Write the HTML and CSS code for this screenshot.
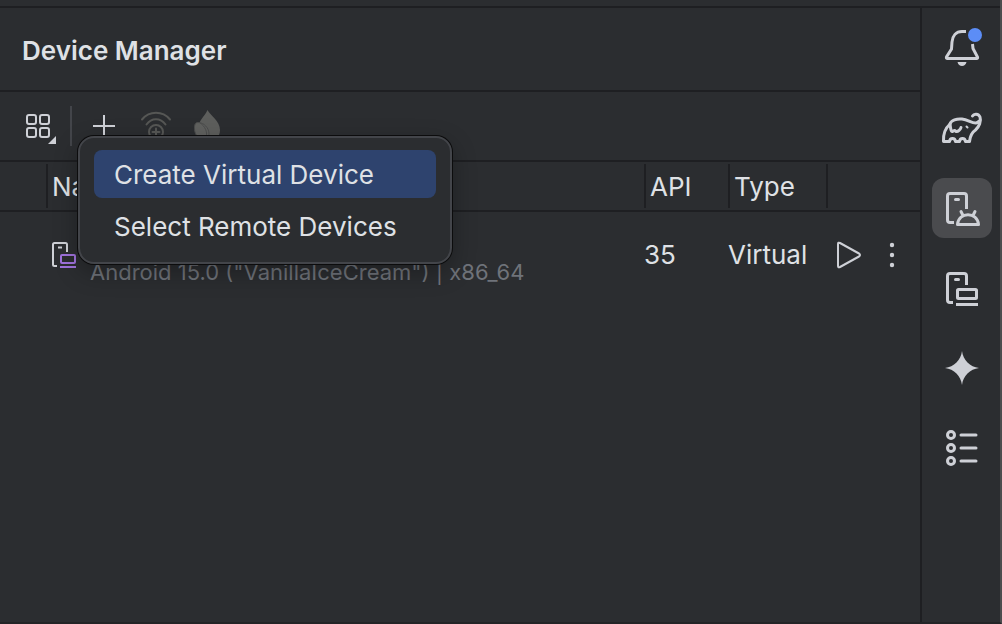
FILE: index.html
```html
<!DOCTYPE html>
<html lang="en">
<head>
<meta charset="utf-8">
<title>Device Manager</title>
<link rel="stylesheet" href="styles.css">
</head>
<body>
<div class="window">
  <main class="panel">
    <header class="title-bar"><h1 class="title">Device Manager</h1></header>
    <div class="toolbar">
      <button class="tool" type="button" aria-label="Group devices">
        <svg width="52" height="40" viewBox="0 0 52 40" fill="none" stroke="#ced0d6" stroke-width="2">
          <rect x="15" y="9" width="9" height="9" rx="2"/><rect x="28" y="9" width="9" height="9" rx="2"/>
          <rect x="15" y="22" width="9" height="9" rx="2"/><rect x="28" y="22" width="9" height="9" rx="2"/>
          <path d="M44 30v8h-8z" fill="#ced0d6" stroke="none"/>
        </svg>
      </button>
      <span class="divider"></span>
      <div class="menu-anchor">
        <button class="tool" type="button" aria-label="Add device" aria-haspopup="menu">
          <svg width="52" height="40" viewBox="0 0 52 40" fill="none" stroke="#ced0d6" stroke-width="2">
            <path d="M15 20h22M26 9v22"/>
          </svg>
        </button>
        <div class="menu" role="menu">
          <button class="menu-item selected" type="button" role="menuitem">Create Virtual Device</button>
          <button class="menu-item" type="button" role="menuitem">Select Remote Devices</button>
        </div>
      </div>
      <button class="tool" type="button" aria-label="Pair over Wi-Fi" disabled>
        <svg width="52" height="40" viewBox="0 0 52 40" fill="none" stroke="#565755" stroke-width="2" stroke-linecap="round">
          <path d="M12 13.500C19.500 4.500 32.500 4.500 40 13.500M16.500 18.500C21.500 11.500 30.500 11.500 35.500 18.500"/>
          <circle cx="26" cy="26" r="7"/><path d="M26 22.500v7M22.500 26h7"/>
        </svg>
      </button>
      <button class="tool" type="button" aria-label="Firebase" disabled>
        <svg width="52" height="40" viewBox="0 0 52 40">
          <path d="M25.500 4C28 9 38 15 38 24C38 31 33 35 27 35C20 35 16 31 16 23C16 15 23 10 25.500 4z" fill="#5d5e5c"/>
          <path d="M16 16.500C22 16.500 27 22 27 28C27 31 25 34 22 35C16 33 12 28 12.500 21C12.500 18.500 13.500 16.500 16 16.500z" fill="#60615f" stroke="#4b4c4c"/>
          <path d="M18 17C23 20 26 26 24 33" fill="none" stroke="#4b4c4c"/>
        </svg>
      </button>
    </div>
    <table class="devices">
      <colgroup><col class="col-icon"><col><col class="col-api"><col class="col-type"><col class="col-actions"></colgroup>
      <thead>
        <tr>
          <th></th>
          <th scope="col"><div class="head">Name</div></th>
          <th scope="col"><div class="head">API</div></th>
          <th scope="col"><div class="head">Type</div></th>
          <th><div class="head"></div></th>
        </tr>
      </thead>
      <tbody>
        <tr>
          <td></td>
          <td>
            <div class="device">
              <svg width="30" height="30" viewBox="0 0 30 30" fill="none" stroke="#ced0d6" stroke-width="2">
                <path d="M11 26H8.500Q7 26 7 24.500V4.500Q7 3 8.500 3H19.500Q21 3 21 4.500V12M12 7.500h4"/>
                <g stroke="#9f72dc"><rect x="15" y="15" width="14" height="8" rx="1"/><path d="M14 27h16"/></g>
              </svg>
              <span class="detail">Android 15.0 ("VanillaIceCream") | x86_64</span>
            </div>
          </td>
          <td>35</td>
          <td>Virtual</td>
          <td>
            <div class="actions">
              <button class="action" type="button" aria-label="Start">
                <svg width="44" height="40" viewBox="0 0 44 40" fill="none" stroke="#ced0d6" stroke-width="2" stroke-linejoin="round">
                  <path d="M12 9Q12 7 14 8L33 18.500Q35 20 33 21.500L14 32Q12 33 12 31z"/>
                </svg>
              </button>
              <button class="action" type="button" aria-label="More actions">
                <svg width="44" height="40" viewBox="0 0 44 40" fill="#ced0d6">
                  <circle cx="22" cy="10" r="2.200"/><circle cx="22" cy="20" r="2.200"/><circle cx="22" cy="30" r="2.200"/>
                </svg>
              </button>
            </div>
          </td>
        </tr>
      </tbody>
    </table>
  </main>
  <nav class="sidebar" aria-label="Tool windows">
    <button class="side" type="button" aria-label="Notifications">
      <svg width="60" height="60" viewBox="0 0 60 60" fill="none" stroke="#ced0d6" stroke-width="3">
        <path d="M34 13.500H30C24 13.500 20.500 18 20 24L19.500 31L14.500 39Q14 40.500 15.500 40.500H44.500Q46 40.500 45.500 39L41 30.500L40.500 26"/>
        <path d="M25.500 44h9C34 46.500 32 48 30 48S26 46.500 25.500 44z" fill="#ced0d6" stroke="none"/>
        <circle cx="43" cy="17" r="7" fill="#5c8df6" stroke="none"/>
      </svg>
    </button>
    <button class="side" type="button" aria-label="Gradle">
      <svg width="60" height="60" viewBox="0 0 60 60" fill="none" stroke="#ced0d6" stroke-width="3" stroke-linejoin="round" stroke-linecap="round">
        <path d="M40.500 18C42 15.500 46.500 15.500 48 19C49.500 23 47 29 43.500 32C39 35 38 39 37.500 43.500H33.500C33 39.500 28 39.500 27.500 43.500H23.500C23 39.500 18 39.500 17.500 43.500H11.500C11 36 13.500 30 18 26C19 22 25 20.500 30 21C36 21.500 40 25.500 44 25Q46 24.500 47 23"/>
        <path d="M18 26C18.500 30 19 34 20.500 33.500C22 33 22 31.500 24 33.500C26 34 28.500 31.500 29 29.500"/>
        <path d="M34.500 28.500l1 1" stroke-width="2"/>
      </svg>
    </button>
    <button class="side active" type="button" aria-label="Device Manager">
      <svg width="60" height="60" viewBox="0 0 60 60" fill="none" stroke="#ced0d6" stroke-width="3">
        <path d="M22 44.500H18Q15.500 44.500 15.500 42V18Q15.500 15.500 18 15.500H32Q34.500 15.500 34.500 18V31"/>
        <path d="M23.500 21.500h3M29 33.500l2 4M43 33.500l-2 4" stroke-linecap="round"/>
        <path d="M25.500 46.500C26.500 33.500 45.500 33.500 46.500 46.500z" stroke-linejoin="round"/>
      </svg>
    </button>
    <button class="side" type="button" aria-label="Running Devices">
      <svg width="60" height="60" viewBox="0 0 60 60" fill="none" stroke="#ced0d6" stroke-width="3">
        <path d="M21 44.500H18Q15.500 44.500 15.500 42V18Q15.500 15.500 18 15.500H32Q34.500 15.500 34.500 18V27"/>
        <path d="M23.500 21.500h3" stroke-linecap="round"/>
        <rect x="25.500" y="31.500" width="19" height="9" rx="1"/><path d="M24 46.500h22"/>
      </svg>
    </button>
    <button class="side" type="button" aria-label="Gemini">
      <svg width="60" height="60" viewBox="0 0 60 60" fill="#ced0d6">
        <path d="M30 13C31 22 38 29 47 30C38 31 31 38 30 47C29 38 22 31 13 30C22 29 29 22 30 13z"/>
      </svg>
    </button>
    <button class="side" type="button" aria-label="App Quality">
      <svg width="60" height="60" viewBox="0 0 60 60" fill="none" stroke="#ced0d6" stroke-width="3">
        <circle cx="19" cy="17" r="3.500"/><circle cx="19" cy="30" r="3.500"/><circle cx="19" cy="43" r="3.500"/>
        <path d="M29 17h15M29 30h15M29 43h15" stroke-linecap="round"/>
      </svg>
    </button>
  </nav>
</div>
</body>
</html>
```
FILE: styles.css
```css
* { box-sizing: border-box; }

body {
  margin: 0;
  background: #2b2d30;
  color: #dfe1e5;
  font: 26px/32px Inter, "Liberation Sans", sans-serif;
}

button {
  display: block;
  padding: 0;
  border: 0;
  background: none;
  color: inherit;
  font: inherit;
}

svg { display: block; }

.window {
  display: flex;
  min-height: 100vh;
  padding-top: 6px;
  border-right: 2px solid #4b4c4e;
  border-bottom: 2px solid #232427;
}

.panel {
  flex: 1;
  min-width: 0;
  border-top: 2px solid #1e1f22;
}

.title-bar {
  padding: 27px 22px 23px;
  border-bottom: 2px solid #1e1f22;
}

.title {
  margin: 0;
  font-size: 26px;
  font-weight: 600;
}

.toolbar {
  display: flex;
  align-items: center;
  padding: 14px 12px;
  border-bottom: 2px solid #1e1f22;
}

.divider {
  width: 2px;
  height: 40px;
  margin: 0 6px;
  background: #43454a;
}

.menu-anchor { position: relative; }

.menu {
  position: absolute;
  top: 30px;
  left: 0;
  z-index: 1;
  display: flex;
  flex-direction: column;
  gap: 4px;
  width: 374px;
  padding: 12px 14px;
  border: 2px solid #43454a;
  border-radius: 16px;
  background: #2b2d30;
  box-shadow: 0 0 0 1px #0c0c0d, 0 8px 24px rgba(0, 0, 0, 0.3);
}

.menu-item {
  height: 48px;
  padding: 2px 20px 0;
  border-radius: 8px;
  text-align: left;
}

.menu-item.selected { background: #2e436e; }

.devices {
  width: 100%;
  table-layout: fixed;
  border-collapse: separate;
  border-spacing: 0;
}

.col-icon { width: 46px; }
.col-api { width: 84px; }
.col-type { width: 98px; }
.col-actions { width: 94px; }

th {
  padding: 2px 0;
  border-bottom: 2px solid #1e1f22;
  font-weight: 400;
  text-align: left;
}

.head {
  height: 44px;
  padding: 7px 4px;
  border-left: 2px solid #1e1f22;
}

td {
  height: 86px;
  padding: 0;
  white-space: nowrap;
}

.device {
  display: flex;
  align-items: center;
  gap: 14px;
}

.detail {
  padding-top: 34px;
  color: #6f737a;
  font-size: 22px;
}

.actions { display: flex; }

.sidebar {
  display: flex;
  flex-direction: column;
  gap: 20px;
  padding: 10px 8px 10px 10px;
  border-top: 2px solid #1e1f22;
  border-left: 2px solid #1e1f22;
}

.side { border-radius: 12px; }

.side.active { background: #4a4b4e; }
```
